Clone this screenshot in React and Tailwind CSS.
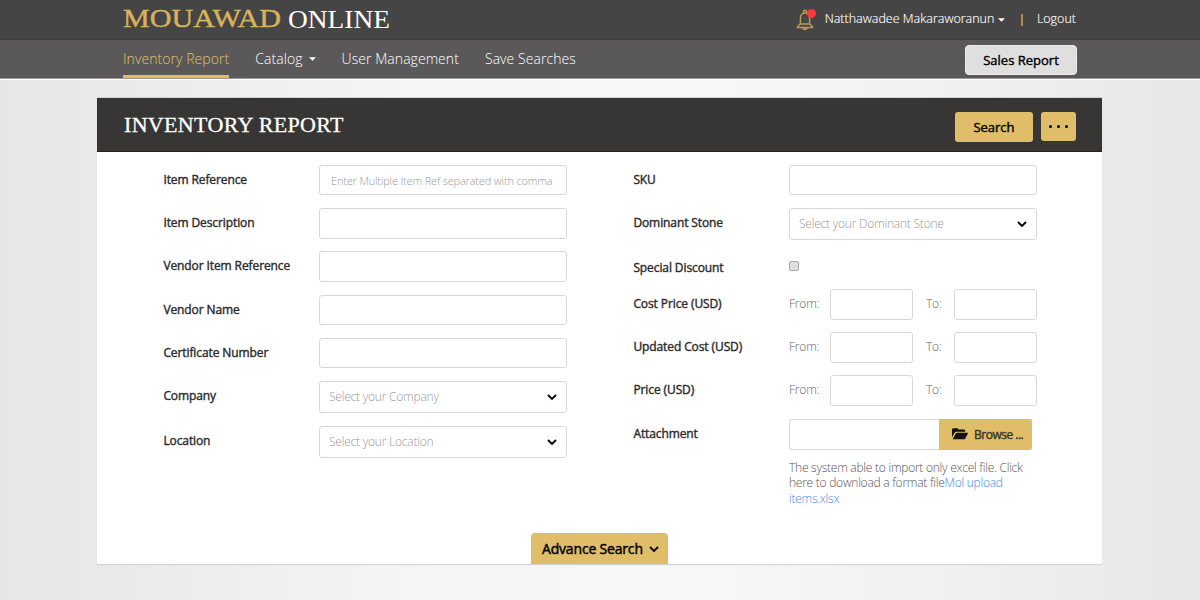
import React from "react";

const field = "rounded-[3px] border border-[#d8d8d8] bg-white outline-none";

function Chevron({ className }) {
  return (
    <svg className={className} viewBox="0 0 10 8" fill="none" stroke="currentColor" strokeWidth="1.8">
      <path d="M1 2l4 4 4-4" />
    </svg>
  );
}

function Caret() {
  return (
    <svg className="h-1 w-[7px]" viewBox="0 0 8 4" fill="#fff">
      <path d="M0 0h8L4 4z" />
    </svg>
  );
}

function Row({ label, height, children }) {
  return (
    <div className={`flex items-start ${height}`}>
      <label className="w-[156px] shrink-0 pl-[0.4px] text-[12px] leading-[29px] tracking-[-0.1px] whitespace-nowrap text-[#2b2b2b] [-webkit-text-stroke:0.4px_#2b2b2b]">
        {label}
      </label>
      {children}
    </div>
  );
}

function Select({ text }) {
  return (
    <div className={`flex h-8 w-[248px] items-center justify-between pr-[9px] pl-[9px] text-[12px] font-light tracking-[-0.22px] text-[#999] ${field}`}>
      <span>{text}</span>
      <Chevron className="h-2 w-[10px] text-black" />
    </div>
  );
}

function Range() {
  return (
    <div className="flex w-[248px] items-start text-[12px] leading-[29px] font-light tracking-[-0.2px] text-[#666]">
      <span className="w-[41px]">From:</span>
      <input className={`h-[31px] w-[83px] ${field}`} />
      <span className="ml-[13px] w-[28px]">To:</span>
      <input className={`h-[31px] w-[83px] ${field}`} />
    </div>
  );
}

function Bell() {
  return (
    <div className="relative mr-[9px] h-[22px] w-5">
      <svg className="h-[22px] w-5" viewBox="0 0 20 22" fill="none" stroke="#b99a55" strokeWidth="1.5">
        <path d="M7.400 4V2.900a1.600 1.600 0 0 1 3.200 0V4M4.400 15V9.400c0-3.100 1.900-5.400 4.600-5.400s4.600 2.300 4.600 5.400V15l2.900 2.500v.9H1.500v-.9zM4.400 15h9.200M6.800 18.500a2.200 1.900 0 0 0 4.400 0" />
      </svg>
      <span className="absolute top-0 right-0 size-[9px] rounded-full bg-[#ff383c]" />
    </div>
  );
}

export default function App() {
  return (
    <div className="flex h-[600px] w-[1200px] flex-col overflow-hidden bg-[linear-gradient(90deg,#e6e6e6_0%,#ececec_15%,#f6f6f6_36%,#f7f7f7_60%,#efefef_82%,#e7e7e7_100%)] font-['Open_Sans',sans-serif]">
      <header className="flex h-10 shrink-0 items-center justify-between border-b border-[#3e3e3e] bg-[#454545] pr-[124px] pl-[123px]">
        <svg className="h-10 w-[270px]" viewBox="0 0 270 40" fontFamily="'Liberation Serif', serif">
          <text x="0" y="27" fontSize="24.5" fill="#d9b35a" stroke="#d9b35a" strokeWidth="0.4" textLength="158" lengthAdjust="spacingAndGlyphs">MOUAWAD</text>
          <text x="165" y="27.500" fontSize="25.500" fill="#fff" textLength="102" lengthAdjust="spacingAndGlyphs">ONLINE</text>
        </svg>
        <div className="flex items-center text-[12.45px] leading-none whitespace-nowrap text-white">
          <Bell />
          <span className="mr-[4px] text-[12.5px] font-light [-webkit-text-stroke:0.15px_white]">Natthawadee Makaraworanun</span>
          <Caret />
          <span className="ml-4 h-3 w-[1.5px] bg-[#b78b46]" />
          <span className="ml-[14px] text-[12.5px] font-light [-webkit-text-stroke:0.15px_white]">Logout</span>
        </div>
      </header>

      <nav className="flex h-[38px] shrink-0 items-start justify-between bg-[#5a5859] pr-[123px] pl-[123px] shadow-[0_1px_0_#9a9a9a,0_2px_0_#fff]">
        <div className="flex h-full text-[14px] leading-[37px] font-light tracking-[0.06px] whitespace-nowrap text-white">
          <span className="mr-[26px] h-full border-b-[3px] border-[#e5bd58] text-[#e0c068]">Inventory Report</span>
          <span className="mr-[26px] flex items-center gap-[6px] self-start">Catalog <Caret /></span>
          <span className="mr-[26px]">User Management</span>
          <span>Save Searches</span>
        </div>
        <button className="mt-[5px] h-[30px] w-[112px] rounded-[4px] border border-[#eee] bg-[#dfdfdf] pt-px text-[13px] text-black [-webkit-text-stroke:0.4px_black]">
          Sales Report
        </button>
      </nav>

      <main className="mt-5 ml-[97px] flex h-[466px] w-[1005px] flex-col bg-white shadow-[0_1px_1px_#d5d5d5,0_-1px_0_#d4d4d0]">
        <div className="flex h-[54px] shrink-0 items-center justify-between border-b border-[#222] bg-[#383634] pr-[26px] pl-[27px]">
          <h1 className="font-['Liberation_Serif',serif] text-[22px] leading-none tracking-[0.33px] text-white [-webkit-text-stroke:0.3px_white]">INVENTORY REPORT</h1>
          <div className="flex gap-2">
            <button className="mt-[5px] h-[30px] w-[78px] rounded-[3px] bg-[#dfbd69] pt-px text-[13px] text-black [-webkit-text-stroke:0.4px_black]">Search</button>
            <button className="mt-[5px] flex h-[29px] w-[35px] items-center justify-center gap-[5px] rounded-[3px] bg-[#dfbd69]">
              <span className="size-[3px] rounded-full bg-black" />
              <span className="size-[3px] rounded-full bg-black" />
              <span className="size-[3px] rounded-full bg-black" />
            </button>
          </div>
        </div>

        <div className="flex h-[381px] shrink-0 pt-[13px] pl-[66px]">
          <div className="w-[470px]">
            <Row label="Item Reference" height="h-[43px]">
              <input className={`h-[30px] w-[248px] px-[11px] pt-px text-[11px] font-light tracking-[-0.17px] placeholder:text-[#999] ${field}`} placeholder="Enter Multiple Item Ref separated with comma" />
            </Row>
            <Row label="Item Description" height="h-[43px]"><input className={`h-[31px] w-[248px] ${field}`} /></Row>
            <Row label="Vendor Item Reference" height="h-[43.500px]"><input className={`h-[31px] w-[248px] ${field}`} /></Row>
            <Row label="Vendor Name" height="h-[43.500px]"><input className={`h-[30px] w-[248px] ${field}`} /></Row>
            <Row label="Certificate Number" height="h-[43px]"><input className={`h-[30px] w-[248px] ${field}`} /></Row>
            <Row label="Company" height="h-[45px]"><Select text="Select your Company" /></Row>
            <Row label="Location" height="h-[45px]"><Select text="Select your Location" /></Row>
          </div>
          <div>
            <Row label="SKU" height="h-[43px]"><input className={`h-[30px] w-[248px] ${field}`} /></Row>
            <Row label="Dominant Stone" height="h-[45px]"><Select text="Select your Dominant Stone" /></Row>
            <Row label="Special Discount" height="h-[36px]">
              <span className="mt-2 size-[10px] rounded-[2px] border border-[#aaa] bg-[#dedede]" />
            </Row>
            <Row label="Cost Price (USD)" height="h-[43px]"><Range /></Row>
            <Row label="Updated Cost (USD)" height="h-[43.400px]"><Range /></Row>
            <Row label="Price (USD)" height="h-[43.400px]"><Range /></Row>
            <Row label="Attachment" height="h-[90px]">
              <div className="w-[248px]">
                <div className="flex">
                  <input className="h-[31px] w-[150px] rounded-l-[3px] border border-r-0 border-[#d8d8d8] bg-white" />
                  <button className="flex h-[31px] w-[93px] items-center rounded-r-[2px] bg-[#dfbd69] pl-[13px] text-[12px] tracking-[-0.5px] text-[#3b3525] [-webkit-text-stroke:0.4px_#3b3525]">
                    <svg className="mr-[6px] h-3 w-4" viewBox="0 0 16 12" fill="#111">
                      <path d="M0 9.3V1.8C0 .8.6.2 1.500.2h3.300c.9 0 1.400.5 1.400 1.400h5.500c.9 0 1.400.5 1.400 1.400v.8H4.600c-1 0-1.700.4-2.300 1.200z" />
                      <path d="M.7 11.200l3-5.600c.3-.6.8-.8 1.400-.8h10.300c.5 0 .7.4.4.9l-2.600 4.700c-.3.6-.8.8-1.400.8z" />
                    </svg>
                    <span className="pt-px">Browse ...</span>
                  </button>
                </div>
                <p className="mt-[10px] text-[12px] leading-[15.5px] font-light tracking-[-0.25px] whitespace-nowrap text-[#555]">
                  The system able to import only excel file. Click<br />
                  here to download a format file<span className="text-[#3b8be8]">Mol upload</span><br />
                  <span className="text-[#3b8be8]">items.xlsx</span>
                </p>
              </div>
            </Row>
          </div>
        </div>

        <button className="ml-[434px] flex h-[31px] w-[137px] items-center rounded-t-[4px] bg-[#dfbd69] pl-[11px] text-[14px] tracking-[-0.18px] whitespace-nowrap text-black [-webkit-text-stroke:0.45px_black]">
          Advance Search
          <Chevron className="ml-[6px] h-2 w-[10px]" />
        </button>
      </main>
    </div>
  );
}
